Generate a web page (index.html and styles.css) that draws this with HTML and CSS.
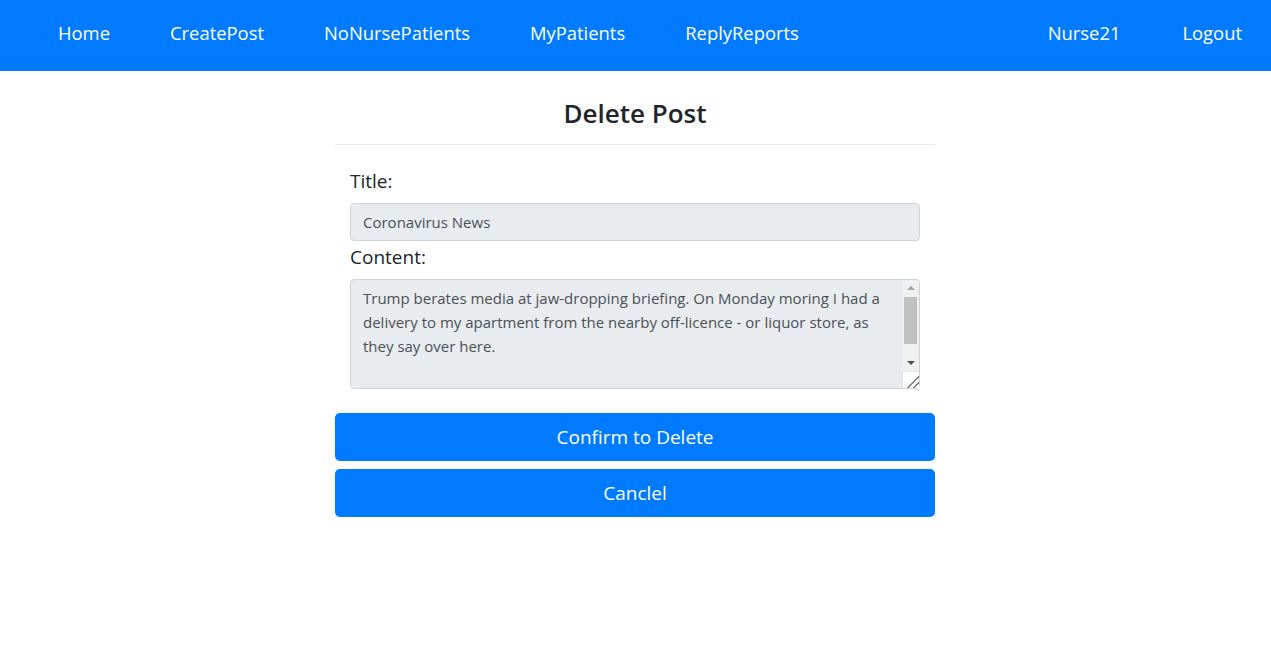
FILE: index.html
```html
<!DOCTYPE html>
<html lang="en">
<head>
<meta charset="utf-8">
<title>Delete Post</title>
<link rel="stylesheet" href="styles.css">
</head>
<body>
<nav class="navbar">
  <ul class="nav-left">
    <li><a href="#">Home</a></li>
    <li><a href="#">CreatePost</a></li>
    <li><a href="#">NoNursePatients</a></li>
    <li><a href="#">MyPatients</a></li>
    <li><a href="#">ReplyReports</a></li>
  </ul>
  <ul class="nav-right">
    <li><a href="#">Nurse21</a></li>
    <li><a href="#">Logout</a></li>
  </ul>
</nav>
<main class="container">
  <h3 class="title">Delete Post</h3>
  <hr class="divider">
  <form class="form">
    <label class="label" for="title">Title:</label>
    <input class="control" id="title" type="text" value="Coronavirus News" readonly>
    <label class="label" for="content">Content:</label>
    <div class="area-wrap">
      <textarea class="control area" id="content" readonly>Trump berates media at jaw-dropping briefing. On Monday moring I had a delivery to my apartment from the nearby off-licence - or liquor store, as they say over here.</textarea>
      <div class="fake-scroll" aria-hidden="true">
        <div class="sb-btn sb-up"><span class="tri-up"></span></div>
        <div class="sb-track"><div class="sb-thumb"></div></div>
        <div class="sb-btn sb-down"><span class="tri-down"></span></div>
        <div class="sb-resizer"></div>
      </div>
    </div>
  </form>
  <div class="actions">
    <button class="btn" type="button">Confirm to Delete</button>
    <button class="btn" type="button">Canclel</button>
  </div>
</main>
</body>
</html>
```
FILE: styles.css
```css
* { box-sizing: border-box; }
html, body { margin: 0; padding: 0; }
body {
  font-family: "Open Sans", "Noto Sans", sans-serif;
  color: #212529;
  background: #fff;
}
.navbar {
  height: 71px;
  background: #007bff;
  display: flex;
  justify-content: space-between;
  align-items: center;
  padding: 0 0 6px 28px;
}
.nav-left, .nav-right {
  list-style: none;
  margin: 0;
  padding: 0;
  display: flex;
}
.navbar a {
  display: block;
  padding: 0 30px;
  color: #fff;
  text-decoration: none;
  font-size: 18.4px;
  line-height: 30px;
}
.nav-right a {
  padding: 0 31px;
}
.nav-right li:last-child a {
  padding-right: 29px;
}
.container {
  width: 600px;
  margin-left: calc(50% - 300.5px);
  padding-top: 25px;
}
.title {
  margin: 0;
  text-align: center;
  font-size: 26px;
  font-weight: 600;
  line-height: 34px;
}
.divider {
  margin: 14px 0 0;
  border: 0;
  border-top: 1px solid #e6e6e6;
}
.form {
  padding: 21px 15px 0;
  display: flex;
  flex-direction: column;
}
.label {
  font-size: 19px;
  line-height: 30px;
  margin-bottom: 7px;
}
.control {
  display: block;
  width: 100%;
  height: 38px;
  padding: 6px 12px;
  font-family: inherit;
  font-size: 15px;
  line-height: 24px;
  color: #495057;
  background: #e9ecef;
  border: 1px solid #ced4da;
  border-radius: 4px;
  margin: 0 0 1px;
}
.area-wrap {
  position: relative;
}
.area {
  height: 110px;
  overflow: hidden;
  resize: none;
  padding-right: 29px;
}
.fake-scroll {
  position: absolute;
  top: 1px;
  right: 1px;
  bottom: 2px;
  width: 17px;
  display: flex;
  flex-direction: column;
  background: #f0f0f0;
  border-top-right-radius: 3px;
}
.sb-btn {
  height: 16px;
  display: flex;
  align-items: center;
  justify-content: center;
}
.tri-up {
  width: 0;
  height: 0;
  border-left: 4px solid transparent;
  border-right: 4px solid transparent;
  border-bottom: 4px solid #a3a3a3;
}
.tri-down {
  width: 0;
  height: 0;
  border-left: 4px solid transparent;
  border-right: 4px solid transparent;
  border-top: 4px solid #505050;
}
.sb-track {
  flex: 1;
  padding: 1px 2px;
}
.sb-thumb {
  height: 47px;
  background: #c1c1c1;
}
.sb-resizer {
  height: 17px;
  background-color: #fff;
  border-top: 1px solid #e6e6e6;
  border-left: 1px solid #e6e6e6;
  background-image: linear-gradient(135deg, transparent 62%, #7a7a7a 62%, #7a7a7a 67%, transparent 67%, transparent 80%, #7a7a7a 80%, #7a7a7a 85%, transparent 85%);
  border-bottom-right-radius: 3px;
}
.actions {
  margin-top: 23px;
  display: flex;
  flex-direction: column;
  gap: 8px;
}
.btn {
  height: 48px;
  width: 100%;
  border: 0;
  border-radius: 5px;
  background: #007bff;
  color: #fff;
  font-family: inherit;
  font-size: 19px;
  cursor: pointer;
}
```
